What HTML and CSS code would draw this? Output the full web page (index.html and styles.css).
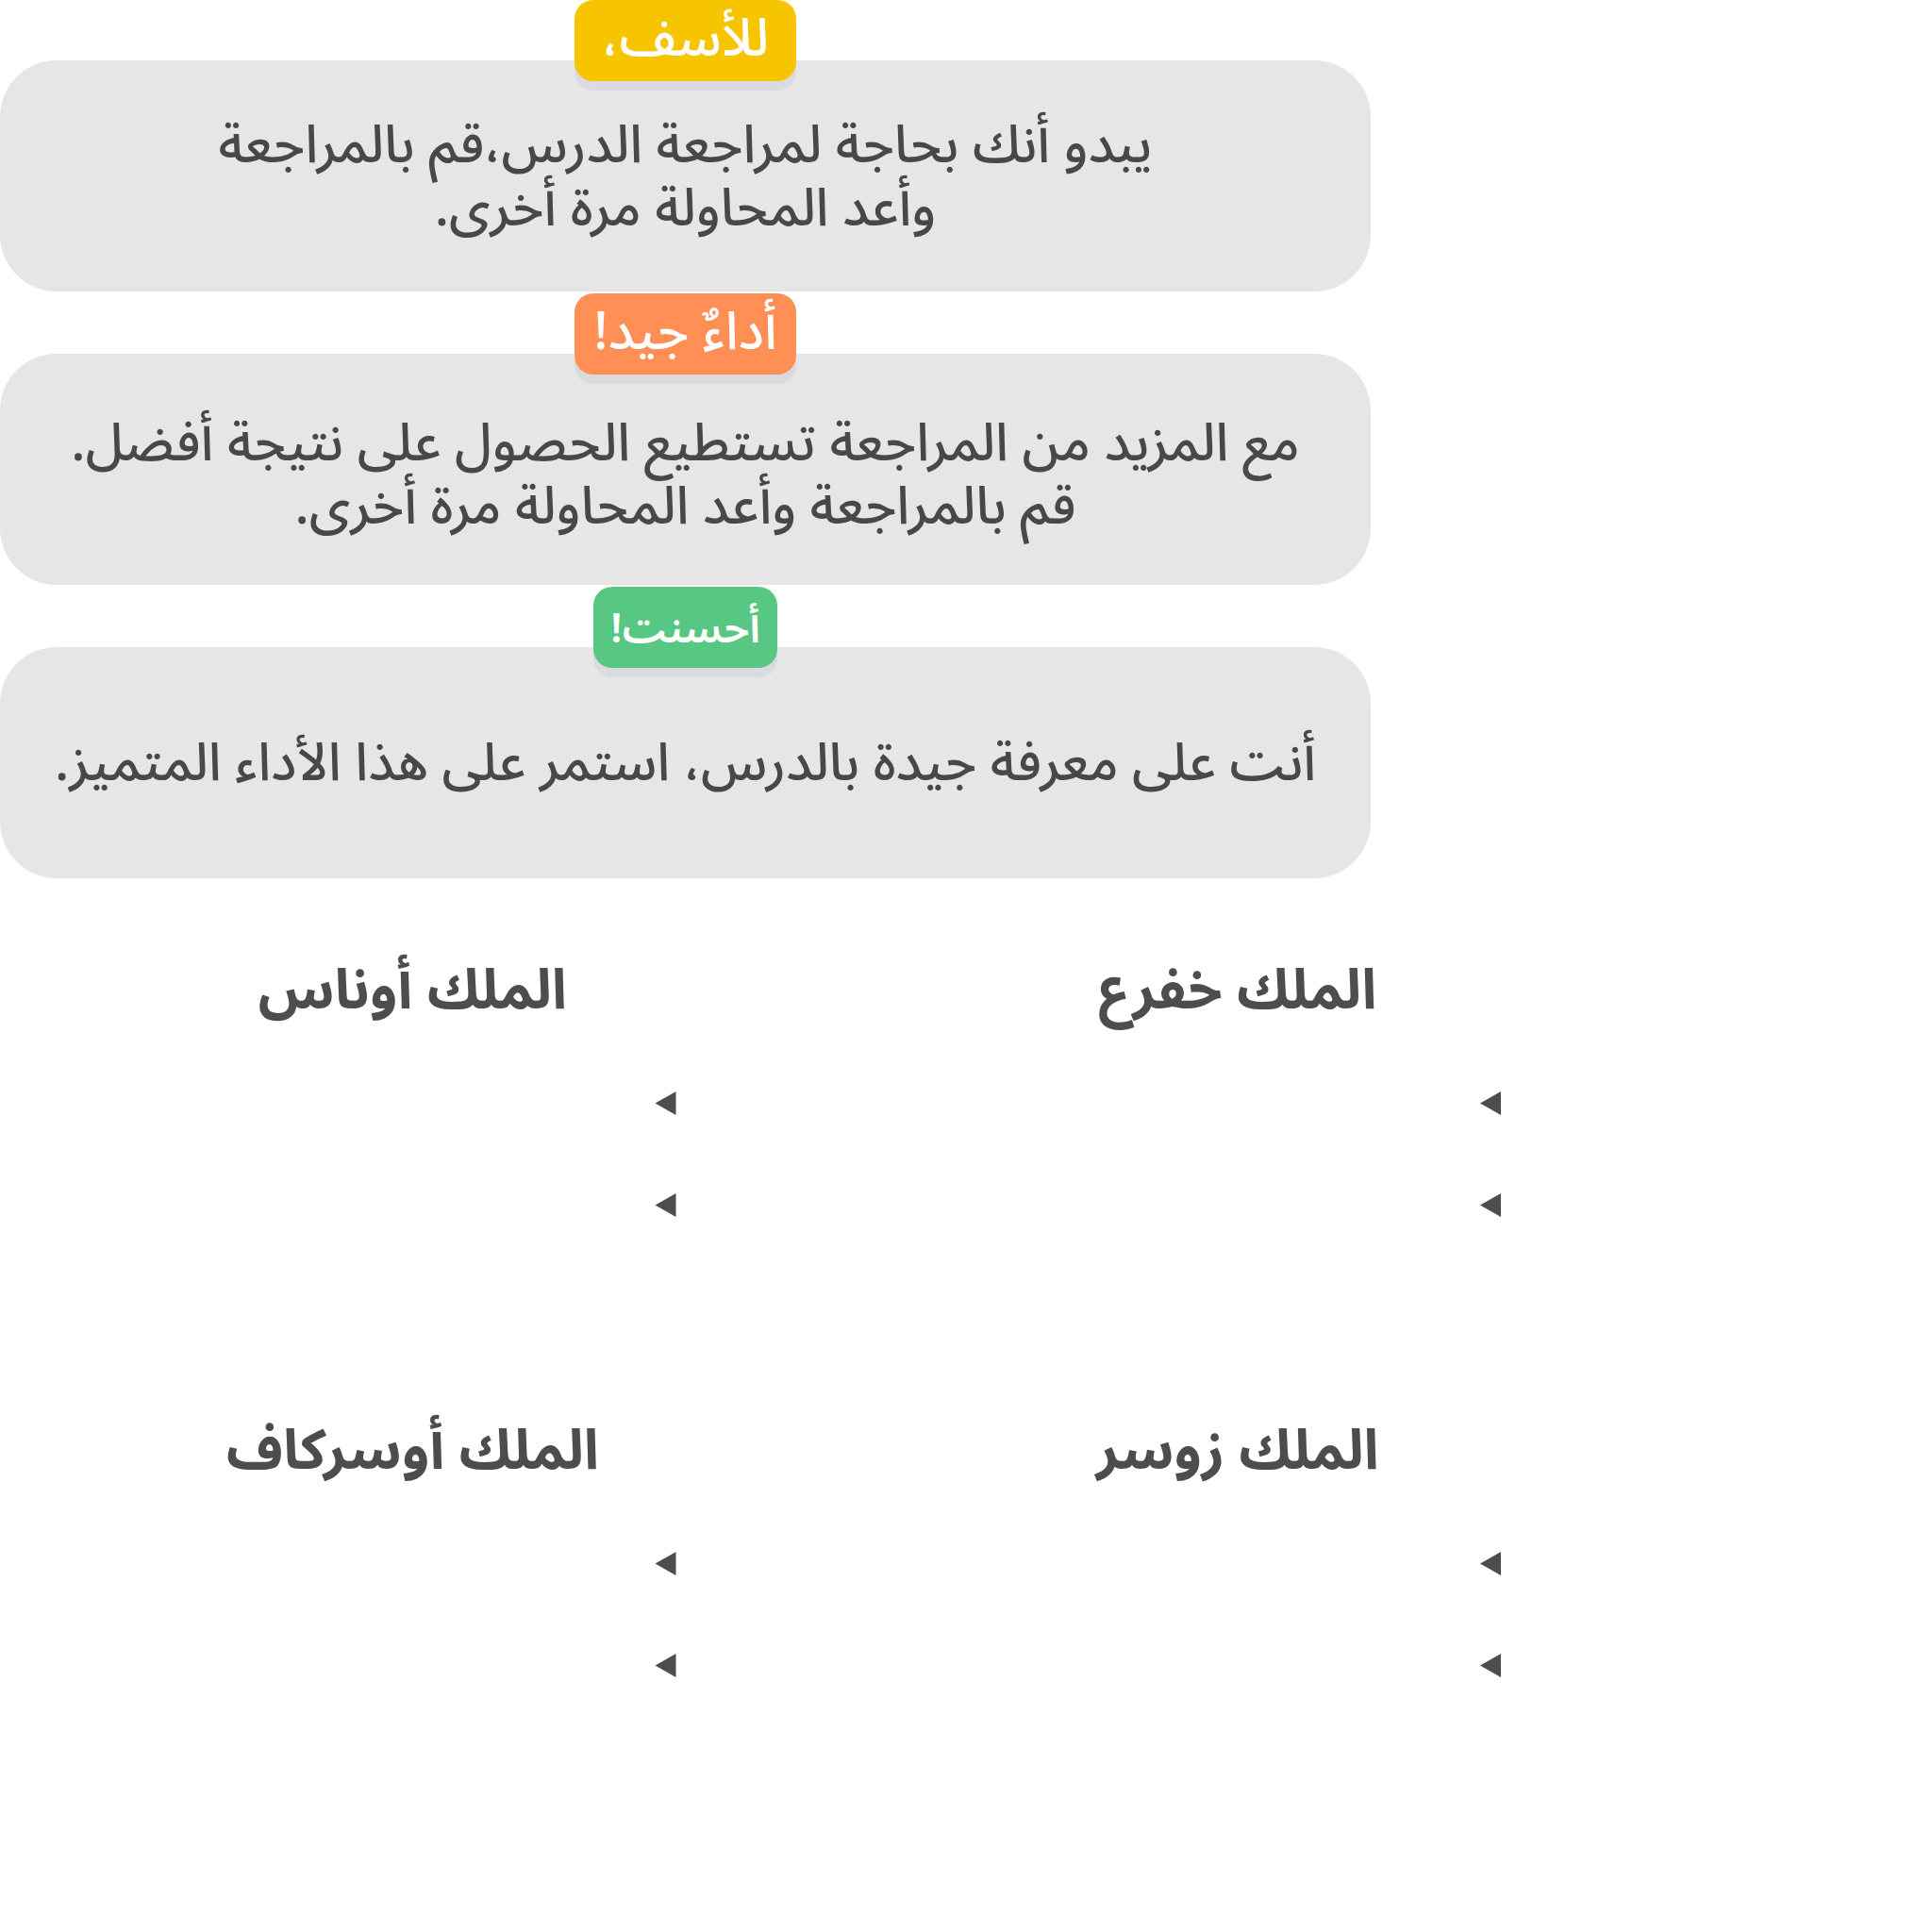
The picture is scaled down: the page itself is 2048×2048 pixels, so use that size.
FILE: index.html
```html
<!DOCTYPE html>
<html lang="ar" dir="rtl">
<head>
<meta charset="utf-8">
<title>نتيجة الاختبار</title>
<link rel="stylesheet" href="styles.css">
</head>
<body>
<main>
  <div class="results">
    <section class="result">
      <h2 class="badge badge-low">للأسف،</h2>
      <p class="message">يبدو أنك بحاجة لمراجعة الدرس،قم بالمراجعة<br>وأعد المحاولة مرة أخرى.</p>
    </section>
    <section class="result">
      <h2 class="badge badge-mid">أداءٌ جيد!</h2>
      <p class="message message-long">مع المزيد من المراجعة تستطيع الحصول على نتيجة أفضل.<br>قم بالمراجعة وأعد المحاولة مرة أخرى.</p>
    </section>
    <section class="result">
      <h2 class="badge badge-high">أحسنت!</h2>
      <p class="message message-single">أنت على معرفة جيدة بالدرس، استمر على هذا الأداء المتميز.</p>
    </section>
  </div>
  <div class="kings">
    <section class="king">
      <h2 class="king-name">الملك خفرع</h2>
      <ul class="facts"><li class="fact"></li><li class="fact"></li></ul>
    </section>
    <section class="king">
      <h2 class="king-name">الملك أوناس</h2>
      <ul class="facts"><li class="fact"></li><li class="fact"></li></ul>
    </section>
    <section class="king">
      <h2 class="king-name">الملك زوسر</h2>
      <ul class="facts"><li class="fact"></li><li class="fact"></li></ul>
    </section>
    <section class="king">
      <h2 class="king-name">الملك أوسركاف</h2>
      <ul class="facts"><li class="fact"></li><li class="fact"></li></ul>
    </section>
  </div>
</main>
</body>
</html>
```
FILE: styles.css
```css
* { box-sizing: border-box; }

body {
  margin: 0;
  background: #fff;
  color: #484848;
  font-family: "Noto Sans Arabic", "Noto Sans", sans-serif;
}

h2, p, ul { margin: 0; padding: 0; }

.results {
  display: flex;
  flex-direction: column;
  gap: 2px;
  width: 100%;
  max-width: 1453px;
  margin: 0 auto 0 0;
}

.result {
  display: flex;
  flex-direction: column;
  align-items: center;
}

.badge {
  z-index: 1;
  display: flex;
  align-items: center;
  justify-content: center;
  min-width: 235px;
  height: 86px;
  margin-bottom: -22px;
  padding-bottom: 4px;
  border-radius: 20px;
  box-shadow: 0 10px 0 #dadbe0;
  color: #fff;
  font-size: 56px;
  font-weight: 500;
  line-height: 67px;
}

.badge-low { background: #f6c500; }
.badge-mid { background: #ff8f54; }
.badge-high {
  min-width: 195px;
  padding: 4px 0 0;
  background: #58c783;
  font-size: 44px;
  font-weight: 600;
}

.message {
  width: 100%;
  min-height: 245px;
  padding: 57px 24px 24px;
  border-radius: 60px;
  background: #e6e6e6;
  font-size: 56px;
  font-weight: 500;
  line-height: 67px;
  text-align: center;
}

.message-long { padding-top: 62px; }
.message-single { padding-top: 90px; }

.kings {
  display: grid;
  grid-template-columns: 1fr 1fr;
  grid-auto-rows: 488px;
  width: 100%;
  max-width: 1749px;
  margin: 84px auto 0 0;
  color: #4d4d4d;
}

.king-name {
  font-size: 59px;
  font-weight: 700;
  line-height: 72px;
  text-align: center;
}

.facts {
  display: flex;
  flex-direction: column;
  gap: 83px;
  padding: 70px 158px 0 0;
  list-style: none;
}

.fact {
  width: 22px;
  height: 25px;
  background: #4d4d4d;
  clip-path: polygon(100% 0, 100% 100%, 0 50%);
}
```
